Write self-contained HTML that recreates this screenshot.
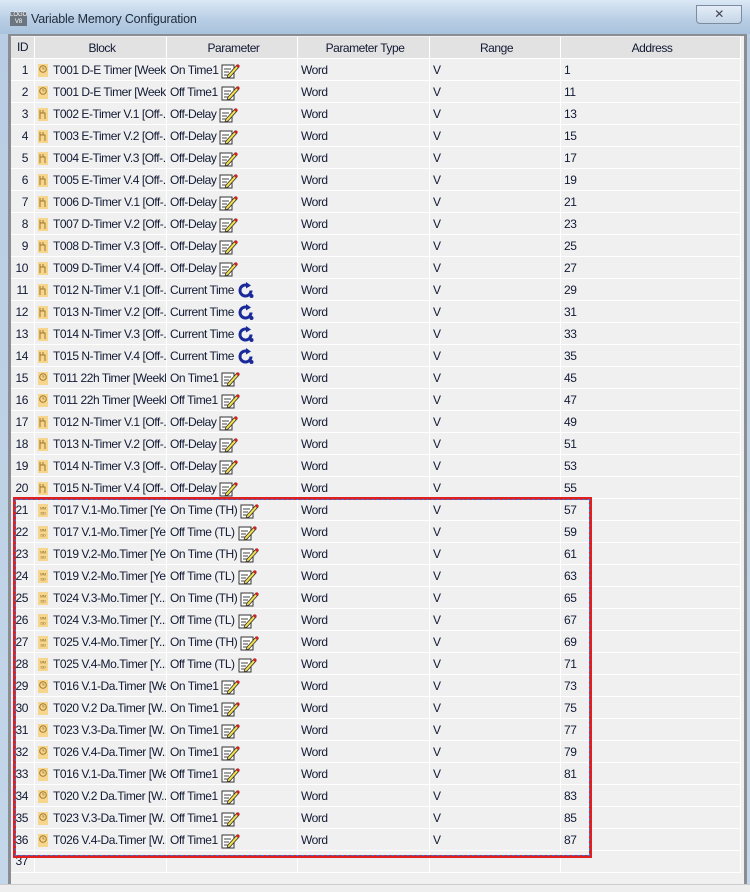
<!DOCTYPE html>
<html><head><meta charset="utf-8"><style>
*{margin:0;padding:0;box-sizing:border-box}
body{width:750px;height:892px;overflow:hidden;background:linear-gradient(#c9dcef,#b8cde3 40px,#c4d6e9);font-family:"Liberation Sans",sans-serif;font-size:12px;letter-spacing:-0.45px;color:#111a33;position:relative}
.title{position:absolute;left:0;top:0;width:750px;height:34px;background:linear-gradient(#dbe8f5,#b7cde4 60%,#a9c2dd)}
.title .t{position:absolute;left:31px;top:12px;font-size:12.5px;color:#1e2a3a;letter-spacing:-0.2px}
.logo{position:absolute;left:10px;top:12px;width:17px;height:14px;background:#6c7480;color:#fff;font-size:6px;line-height:7px;text-align:center;letter-spacing:0}
.close{position:absolute;left:696px;top:5px;width:46px;height:19px;border:1px solid #7c8ca0;border-radius:0 0 4px 4px;background:linear-gradient(#e4edf7,#c5d5e7);text-align:center;font-size:12px;color:#445;line-height:17px}
.frame{position:absolute;left:8px;top:34px;width:739px;height:856px;border:3px solid #8a8d92;border-top:2px solid #8a8d92;background:#f0f0f0;overflow:hidden}
.grid{position:absolute;left:0;top:1px}
.r{display:flex;height:22px;border-bottom:1px solid #fff}
.r>div{height:21px;line-height:21px;border-right:1px solid #fff;white-space:nowrap;overflow:hidden;display:flex;align-items:center;padding-top:1px}
.h>div{justify-content:center;background:#e2e2e2}
.h{height:22px}
.c0{width:24px;justify-content:flex-end;padding-right:6px}
.c1{width:132px;padding-left:3px}
.c2{width:131px;padding-left:3px}
.c3{width:132px;padding-left:3px}
.c4{width:131px;padding-left:3px}
.c5{width:180px;padding-left:3px}
.h .c0{padding:0}
.ic{width:10px;height:13px;margin-right:5px;flex:none;display:inline-block}
svg{flex:none}
.sel{position:absolute;left:13px;top:497px;width:579px;height:361px;border:3px solid #e02020;outline:1px dashed #4070d0;outline-offset:-3px}
.bot{position:absolute;left:0;top:884px;width:750px;height:8px;background:#eeeeee;border-top:1px solid #ccc}
</style></head><body>
<svg width="0" height="0" style="position:absolute">
<defs>
<symbol id="clk" viewBox="0 0 10 13"><rect width="10" height="13" fill="#f6d58c"/><circle cx="5" cy="5" r="3.3" fill="none" stroke="#a07830" stroke-width="1"/><path d="M5 3v2h1.5" stroke="#a07830" fill="none" stroke-width="0.8"/></symbol>
<symbol id="tm" viewBox="0 0 10 13"><rect width="10" height="13" fill="#f6d58c"/><path d="M2 2v9M2 5h5v6M5 2v3" stroke="#a07830" fill="none" stroke-width="1"/></symbol>
<symbol id="cal" viewBox="0 0 10 13"><rect width="10" height="13" fill="#f6d58c"/><text x="5" y="5.5" font-size="4" text-anchor="middle" fill="#8a6a30" font-family="Liberation Sans">MM</text><text x="5" y="10.5" font-size="4" text-anchor="middle" fill="#8a6a30" font-family="Liberation Sans">DD</text></symbol>
<symbol id="ed" viewBox="0 0 19 17"><rect x="1" y="3" width="12" height="13" fill="#fff" stroke="#333" stroke-width="1"/><path d="M3 7h7M3 10h5M3 13h4" stroke="#444" stroke-width="1"/><path d="M7 13l9-10 2 2-9 10-3 1z" fill="#f4e04a" stroke="#333" stroke-width="0.8"/><path d="M15 4l2-2 2 2-2 2z" fill="#d02020"/></symbol>
<symbol id="rf" viewBox="0 0 18 17"><path d="M14 8.5A5.5 5.5 0 1 1 10 3.2" fill="none" stroke="#1a2a9a" stroke-width="3"/><path d="M9 0l5 3.5-5 3z" fill="#1a2a9a"/><circle cx="14.5" cy="14" r="2" fill="#1a2a9a"/></symbol>
</defs></svg>
<div class="title"><div class="logo">LOGO<br>V8</div><div class="t">Variable Memory Configuration</div><div class="close">✕</div></div>
<div class="frame"><div class="grid">
<div class="r h"><div class="c0">ID</div><div class="c1">Block</div><div class="c2">Parameter</div><div class="c3">Parameter Type</div><div class="c4">Range</div><div class="c5">Address</div></div>
<div class="r"><div class="c0">1</div><div class="c1"><svg class="ic" width="10" height="13"><use href="#clk"/></svg>T001 D-E Timer [Weekl...</div><div class="c2">On Time1&nbsp;<svg width="19" height="17"><use href="#ed"/></svg></div><div class="c3">Word</div><div class="c4">V</div><div class="c5">1</div></div>
<div class="r"><div class="c0">2</div><div class="c1"><svg class="ic" width="10" height="13"><use href="#clk"/></svg>T001 D-E Timer [Weekl...</div><div class="c2">Off Time1&nbsp;<svg width="19" height="17"><use href="#ed"/></svg></div><div class="c3">Word</div><div class="c4">V</div><div class="c5">11</div></div>
<div class="r"><div class="c0">3</div><div class="c1"><svg class="ic" width="10" height="13"><use href="#tm"/></svg>T002 E-Timer V.1 [Off-...</div><div class="c2">Off-Delay&nbsp;<svg width="19" height="17"><use href="#ed"/></svg></div><div class="c3">Word</div><div class="c4">V</div><div class="c5">13</div></div>
<div class="r"><div class="c0">4</div><div class="c1"><svg class="ic" width="10" height="13"><use href="#tm"/></svg>T003 E-Timer V.2 [Off-...</div><div class="c2">Off-Delay&nbsp;<svg width="19" height="17"><use href="#ed"/></svg></div><div class="c3">Word</div><div class="c4">V</div><div class="c5">15</div></div>
<div class="r"><div class="c0">5</div><div class="c1"><svg class="ic" width="10" height="13"><use href="#tm"/></svg>T004 E-Timer V.3 [Off-...</div><div class="c2">Off-Delay&nbsp;<svg width="19" height="17"><use href="#ed"/></svg></div><div class="c3">Word</div><div class="c4">V</div><div class="c5">17</div></div>
<div class="r"><div class="c0">6</div><div class="c1"><svg class="ic" width="10" height="13"><use href="#tm"/></svg>T005 E-Timer V.4 [Off-...</div><div class="c2">Off-Delay&nbsp;<svg width="19" height="17"><use href="#ed"/></svg></div><div class="c3">Word</div><div class="c4">V</div><div class="c5">19</div></div>
<div class="r"><div class="c0">7</div><div class="c1"><svg class="ic" width="10" height="13"><use href="#tm"/></svg>T006 D-Timer V.1 [Off-...</div><div class="c2">Off-Delay&nbsp;<svg width="19" height="17"><use href="#ed"/></svg></div><div class="c3">Word</div><div class="c4">V</div><div class="c5">21</div></div>
<div class="r"><div class="c0">8</div><div class="c1"><svg class="ic" width="10" height="13"><use href="#tm"/></svg>T007 D-Timer V.2 [Off-...</div><div class="c2">Off-Delay&nbsp;<svg width="19" height="17"><use href="#ed"/></svg></div><div class="c3">Word</div><div class="c4">V</div><div class="c5">23</div></div>
<div class="r"><div class="c0">9</div><div class="c1"><svg class="ic" width="10" height="13"><use href="#tm"/></svg>T008 D-Timer V.3 [Off-...</div><div class="c2">Off-Delay&nbsp;<svg width="19" height="17"><use href="#ed"/></svg></div><div class="c3">Word</div><div class="c4">V</div><div class="c5">25</div></div>
<div class="r"><div class="c0">10</div><div class="c1"><svg class="ic" width="10" height="13"><use href="#tm"/></svg>T009 D-Timer V.4 [Off-...</div><div class="c2">Off-Delay&nbsp;<svg width="19" height="17"><use href="#ed"/></svg></div><div class="c3">Word</div><div class="c4">V</div><div class="c5">27</div></div>
<div class="r"><div class="c0">11</div><div class="c1"><svg class="ic" width="10" height="13"><use href="#tm"/></svg>T012 N-Timer V.1 [Off-...</div><div class="c2">Current Time&nbsp;<svg width="18" height="17"><use href="#rf"/></svg></div><div class="c3">Word</div><div class="c4">V</div><div class="c5">29</div></div>
<div class="r"><div class="c0">12</div><div class="c1"><svg class="ic" width="10" height="13"><use href="#tm"/></svg>T013 N-Timer V.2 [Off-...</div><div class="c2">Current Time&nbsp;<svg width="18" height="17"><use href="#rf"/></svg></div><div class="c3">Word</div><div class="c4">V</div><div class="c5">31</div></div>
<div class="r"><div class="c0">13</div><div class="c1"><svg class="ic" width="10" height="13"><use href="#tm"/></svg>T014 N-Timer V.3 [Off-...</div><div class="c2">Current Time&nbsp;<svg width="18" height="17"><use href="#rf"/></svg></div><div class="c3">Word</div><div class="c4">V</div><div class="c5">33</div></div>
<div class="r"><div class="c0">14</div><div class="c1"><svg class="ic" width="10" height="13"><use href="#tm"/></svg>T015 N-Timer V.4 [Off-...</div><div class="c2">Current Time&nbsp;<svg width="18" height="17"><use href="#rf"/></svg></div><div class="c3">Word</div><div class="c4">V</div><div class="c5">35</div></div>
<div class="r"><div class="c0">15</div><div class="c1"><svg class="ic" width="10" height="13"><use href="#clk"/></svg>T011 22h Timer [Weekl...</div><div class="c2">On Time1&nbsp;<svg width="19" height="17"><use href="#ed"/></svg></div><div class="c3">Word</div><div class="c4">V</div><div class="c5">45</div></div>
<div class="r"><div class="c0">16</div><div class="c1"><svg class="ic" width="10" height="13"><use href="#clk"/></svg>T011 22h Timer [Weekl...</div><div class="c2">Off Time1&nbsp;<svg width="19" height="17"><use href="#ed"/></svg></div><div class="c3">Word</div><div class="c4">V</div><div class="c5">47</div></div>
<div class="r"><div class="c0">17</div><div class="c1"><svg class="ic" width="10" height="13"><use href="#tm"/></svg>T012 N-Timer V.1 [Off-...</div><div class="c2">Off-Delay&nbsp;<svg width="19" height="17"><use href="#ed"/></svg></div><div class="c3">Word</div><div class="c4">V</div><div class="c5">49</div></div>
<div class="r"><div class="c0">18</div><div class="c1"><svg class="ic" width="10" height="13"><use href="#tm"/></svg>T013 N-Timer V.2 [Off-...</div><div class="c2">Off-Delay&nbsp;<svg width="19" height="17"><use href="#ed"/></svg></div><div class="c3">Word</div><div class="c4">V</div><div class="c5">51</div></div>
<div class="r"><div class="c0">19</div><div class="c1"><svg class="ic" width="10" height="13"><use href="#tm"/></svg>T014 N-Timer V.3 [Off-...</div><div class="c2">Off-Delay&nbsp;<svg width="19" height="17"><use href="#ed"/></svg></div><div class="c3">Word</div><div class="c4">V</div><div class="c5">53</div></div>
<div class="r"><div class="c0">20</div><div class="c1"><svg class="ic" width="10" height="13"><use href="#tm"/></svg>T015 N-Timer V.4 [Off-...</div><div class="c2">Off-Delay&nbsp;<svg width="19" height="17"><use href="#ed"/></svg></div><div class="c3">Word</div><div class="c4">V</div><div class="c5">55</div></div>
<div class="r"><div class="c0">21</div><div class="c1"><svg class="ic" width="10" height="13"><use href="#cal"/></svg>T017 V.1-Mo.Timer [Ye...</div><div class="c2">On Time (TH)&nbsp;<svg width="19" height="17"><use href="#ed"/></svg></div><div class="c3">Word</div><div class="c4">V</div><div class="c5">57</div></div>
<div class="r"><div class="c0">22</div><div class="c1"><svg class="ic" width="10" height="13"><use href="#cal"/></svg>T017 V.1-Mo.Timer [Ye...</div><div class="c2">Off Time (TL)&nbsp;<svg width="19" height="17"><use href="#ed"/></svg></div><div class="c3">Word</div><div class="c4">V</div><div class="c5">59</div></div>
<div class="r"><div class="c0">23</div><div class="c1"><svg class="ic" width="10" height="13"><use href="#cal"/></svg>T019 V.2-Mo.Timer [Ye...</div><div class="c2">On Time (TH)&nbsp;<svg width="19" height="17"><use href="#ed"/></svg></div><div class="c3">Word</div><div class="c4">V</div><div class="c5">61</div></div>
<div class="r"><div class="c0">24</div><div class="c1"><svg class="ic" width="10" height="13"><use href="#cal"/></svg>T019 V.2-Mo.Timer [Ye...</div><div class="c2">Off Time (TL)&nbsp;<svg width="19" height="17"><use href="#ed"/></svg></div><div class="c3">Word</div><div class="c4">V</div><div class="c5">63</div></div>
<div class="r"><div class="c0">25</div><div class="c1"><svg class="ic" width="10" height="13"><use href="#cal"/></svg>T024 V.3-Mo.Timer [Y...</div><div class="c2">On Time (TH)&nbsp;<svg width="19" height="17"><use href="#ed"/></svg></div><div class="c3">Word</div><div class="c4">V</div><div class="c5">65</div></div>
<div class="r"><div class="c0">26</div><div class="c1"><svg class="ic" width="10" height="13"><use href="#cal"/></svg>T024 V.3-Mo.Timer [Y...</div><div class="c2">Off Time (TL)&nbsp;<svg width="19" height="17"><use href="#ed"/></svg></div><div class="c3">Word</div><div class="c4">V</div><div class="c5">67</div></div>
<div class="r"><div class="c0">27</div><div class="c1"><svg class="ic" width="10" height="13"><use href="#cal"/></svg>T025 V.4-Mo.Timer [Y...</div><div class="c2">On Time (TH)&nbsp;<svg width="19" height="17"><use href="#ed"/></svg></div><div class="c3">Word</div><div class="c4">V</div><div class="c5">69</div></div>
<div class="r"><div class="c0">28</div><div class="c1"><svg class="ic" width="10" height="13"><use href="#cal"/></svg>T025 V.4-Mo.Timer [Y...</div><div class="c2">Off Time (TL)&nbsp;<svg width="19" height="17"><use href="#ed"/></svg></div><div class="c3">Word</div><div class="c4">V</div><div class="c5">71</div></div>
<div class="r"><div class="c0">29</div><div class="c1"><svg class="ic" width="10" height="13"><use href="#clk"/></svg>T016 V.1-Da.Timer [We...</div><div class="c2">On Time1&nbsp;<svg width="19" height="17"><use href="#ed"/></svg></div><div class="c3">Word</div><div class="c4">V</div><div class="c5">73</div></div>
<div class="r"><div class="c0">30</div><div class="c1"><svg class="ic" width="10" height="13"><use href="#clk"/></svg>T020 V.2 Da.Timer [W...</div><div class="c2">On Time1&nbsp;<svg width="19" height="17"><use href="#ed"/></svg></div><div class="c3">Word</div><div class="c4">V</div><div class="c5">75</div></div>
<div class="r"><div class="c0">31</div><div class="c1"><svg class="ic" width="10" height="13"><use href="#clk"/></svg>T023 V.3-Da.Timer [W...</div><div class="c2">On Time1&nbsp;<svg width="19" height="17"><use href="#ed"/></svg></div><div class="c3">Word</div><div class="c4">V</div><div class="c5">77</div></div>
<div class="r"><div class="c0">32</div><div class="c1"><svg class="ic" width="10" height="13"><use href="#clk"/></svg>T026 V.4-Da.Timer [W...</div><div class="c2">On Time1&nbsp;<svg width="19" height="17"><use href="#ed"/></svg></div><div class="c3">Word</div><div class="c4">V</div><div class="c5">79</div></div>
<div class="r"><div class="c0">33</div><div class="c1"><svg class="ic" width="10" height="13"><use href="#clk"/></svg>T016 V.1-Da.Timer [We...</div><div class="c2">Off Time1&nbsp;<svg width="19" height="17"><use href="#ed"/></svg></div><div class="c3">Word</div><div class="c4">V</div><div class="c5">81</div></div>
<div class="r"><div class="c0">34</div><div class="c1"><svg class="ic" width="10" height="13"><use href="#clk"/></svg>T020 V.2 Da.Timer [W...</div><div class="c2">Off Time1&nbsp;<svg width="19" height="17"><use href="#ed"/></svg></div><div class="c3">Word</div><div class="c4">V</div><div class="c5">83</div></div>
<div class="r"><div class="c0">35</div><div class="c1"><svg class="ic" width="10" height="13"><use href="#clk"/></svg>T023 V.3-Da.Timer [W...</div><div class="c2">Off Time1&nbsp;<svg width="19" height="17"><use href="#ed"/></svg></div><div class="c3">Word</div><div class="c4">V</div><div class="c5">85</div></div>
<div class="r"><div class="c0">36</div><div class="c1"><svg class="ic" width="10" height="13"><use href="#clk"/></svg>T026 V.4-Da.Timer [W...</div><div class="c2">Off Time1&nbsp;<svg width="19" height="17"><use href="#ed"/></svg></div><div class="c3">Word</div><div class="c4">V</div><div class="c5">87</div></div>
<div class="r"><div class="c0" style="align-items:flex-end">37</div><div class="c1"></div><div class="c2"></div><div class="c3"></div><div class="c4"></div><div class="c5"></div></div>
</div></div>
<div class="sel"></div>
<div class="bot"></div>
</body></html>
